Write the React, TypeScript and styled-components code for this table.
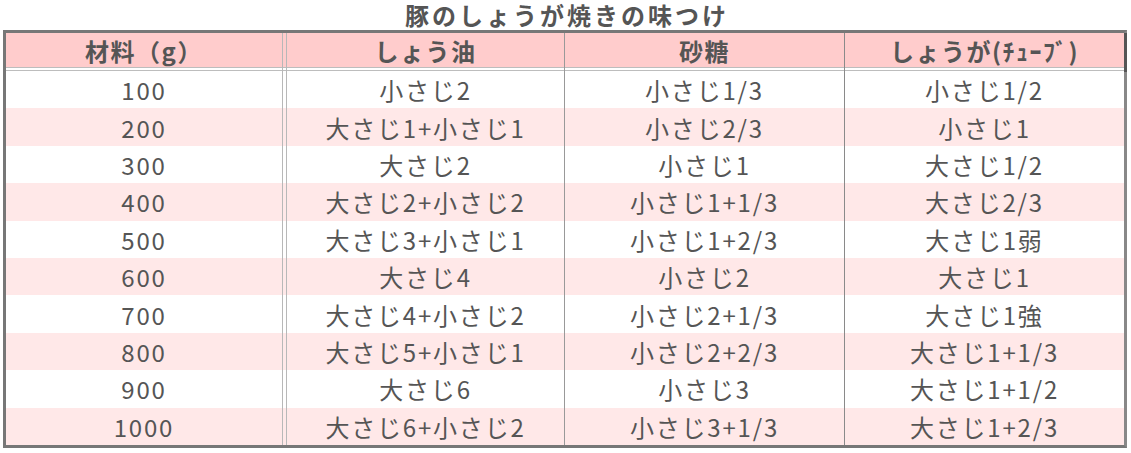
import React from "react";
import styled, { createGlobalStyle } from "styled-components";

const rows: [string, string, string, string][] = [
  ["100", "小さじ2", "小さじ1/3", "小さじ1/2"],
  ["200", "大さじ1+小さじ1", "小さじ2/3", "小さじ1"],
  ["300", "大さじ2", "小さじ1", "大さじ1/2"],
  ["400", "大さじ2+小さじ2", "小さじ1+1/3", "大さじ2/3"],
  ["500", "大さじ3+小さじ1", "小さじ1+2/3", "大さじ1弱"],
  ["600", "大さじ4", "小さじ2", "大さじ1"],
  ["700", "大さじ4+小さじ2", "小さじ2+1/3", "大さじ1強"],
  ["800", "大さじ5+小さじ1", "小さじ2+2/3", "大さじ1+1/3"],
  ["900", "大さじ6", "小さじ3", "大さじ1+1/2"],
  ["1000", "大さじ6+小さじ2", "小さじ3+1/3", "大さじ1+2/3"],
];

const heads = ["材料（g）", "しょう油", "砂糖", "しょうが(ﾁｭｰﾌﾞ)"];

const GlobalStyle = createGlobalStyle`
  html, body {
    margin: 0;
    padding: 0;
    background: #ffffff;
  }
  body {
    font-family: "Noto Sans CJK JP", "Noto Sans", sans-serif;
    color: #555555;
  }
`;

const Page = styled.div`
  width: 1131px;
  height: 453px;
  padding: 0 0 0 3px;
  box-sizing: border-box;
`;

const Title = styled.h1`
  margin: 0;
  line-height: 30px;
  text-align: center;
  font-size: 24px;
  font-weight: 700;
  letter-spacing: 3px;
  color: #555555;
`;

const Frame = styled.div`
  width: 1124px;
  box-sizing: border-box;
  border: 3px solid #777777;
  border-right-color: #888888;
  background: #ffffff;
`;

const Row = styled.div<{ $alt?: boolean }>`
  display: grid;
  grid-template-columns: 277px 282px 280px 279px;
  height: 37.4px;
  background: ${({ $alt }) => ($alt ? "#ffe8e8" : "#ffffff")};
`;

const HeadRow = styled(Row)`
  height: 38px;
  background: linear-gradient(
    to bottom,
    #ffcccc 0 34px,
    #bdbdbd 34px 35px,
    #ffffff 35px 37px,
    #bdbdbd 37px 38px
  );
`;

const Cell = styled.div<{ $col: number; $head?: boolean }>`
  display: flex;
  align-items: center;
  justify-content: center;
  box-sizing: border-box;
  font-size: 24px;
  font-weight: ${({ $head }) => ($head ? 700 : 400)};
  letter-spacing: ${({ $head }) => ($head ? "1.5px" : "1.8px")};
  white-space: nowrap;
  padding-bottom: ${({ $head }) => ($head ? "4px" : "0")};
  border-right: ${({ $col }) =>
    $col === 0
      ? "1px solid #b8b8b8"
      : $col === 1
      ? "1px solid #999999"
      : $col === 2
      ? "1px solid #8a8a8a"
      : "none"};
  border-left: ${({ $col }) => ($col === 1 ? "1px solid #b8b8b8" : "none")};
  margin-left: ${({ $col }) => ($col === 1 ? "3px" : "0")};
  box-shadow: ${({ $col, $head }) =>
    $col === 3 && $head ? "3px 0 0 #555555" : "none"};
`;

export default function App() {
  return (
    <Page>
      <GlobalStyle />
      <Title>豚のしょうが焼きの味つけ</Title>
      <Frame>
        <HeadRow>
          {heads.map((h, i) => (
            <Cell key={h} $col={i} $head>
              {h}
            </Cell>
          ))}
        </HeadRow>
        {rows.map((r, ri) => (
          <Row key={r[0]} $alt={ri % 2 === 1}>
            {r.map((c, ci) => (
              <Cell key={ci} $col={ci}>
                {c}
              </Cell>
            ))}
          </Row>
        ))}
      </Frame>
    </Page>
  );
}
